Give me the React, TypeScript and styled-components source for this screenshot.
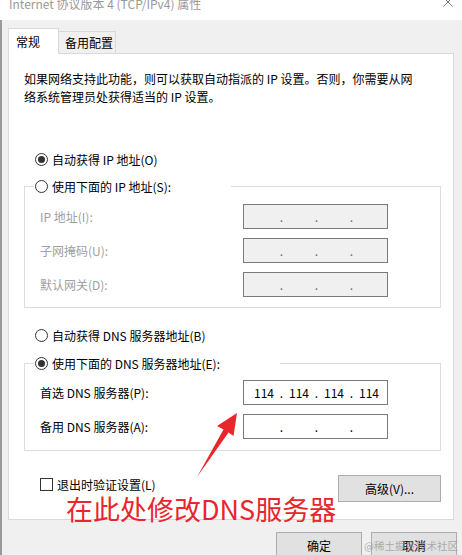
import React from "react";
import styled, { createGlobalStyle } from "styled-components";

const GlobalStyle = createGlobalStyle`
  html, body { margin: 0; padding: 0; }
  body {
    width: 462px;
    height: 555px;
    overflow: hidden;
    background: #f0f0f0;
    font-family: "Noto Sans CJK SC", "Noto Sans", sans-serif;
    font-size: 12px;
    color: #000;
  }
  * { box-sizing: border-box; }
`;

const Window = styled.div`
  position: relative;
  width: 462px;
  height: 555px;
  overflow: hidden;
  display: flex;
  flex-direction: column;
`;

const TitleBar = styled.div`
  height: 20px;
  flex: none;
  background: #fff;
  display: flex;
  justify-content: space-between;
  align-items: flex-start;
  padding: 0 9px 0 9px;
  overflow: hidden;
`;

const Title = styled.div`
  margin-top: -5px;
  line-height: 18px;
  color: #9a9a9a;
  white-space: nowrap;
`;

const CloseIcon = styled.svg`
  margin-top: -3px;
  flex: none;
`;

const Body = styled.div`
  flex: 1;
  display: flex;
  flex-direction: column;
  border-left: 2px solid #9a9a9a;
  padding: 8px 5px 0 6px;
`;

const TabStrip = styled.div`
  display: flex;
  align-items: flex-end;
  position: relative;
  z-index: 1;
  margin-bottom: -1px;
`;

const Tab = styled.div<{ $active?: boolean }>`
  display: flex;
  align-items: center;
  height: ${(p) => (p.$active ? "26px" : "22px")};
  margin-bottom: ${(p) => (p.$active ? "0" : "1px")};
  margin-left: ${(p) => (p.$active ? "0" : "-2px")};
  padding: ${(p) => (p.$active ? "0 18px 0 7px" : "0 2px 0 7px")};
  background: ${(p) => (p.$active ? "#fff" : "#f0f0f0")};
  border: 1px solid #d9d9d9;
  border-bottom: none;
  position: relative;
  z-index: ${(p) => (p.$active ? 2 : 1)};
  white-space: nowrap;
`;

const Panel = styled.div`
  background: #fff;
  border: 1px solid #d9d9d9;
  margin-right: 3px;
  padding: 16px 12px 17px 15px;
  display: flex;
  flex-direction: column;
`;

const Intro = styled.p`
  margin: 0;
  line-height: 18px;
  white-space: nowrap;
`;

const RadioRow = styled.label<{ $mt?: number }>`
  display: flex;
  align-items: center;
  gap: 4px;
  height: 18px;
  margin: ${(p) => p.$mt ?? 0}px 0 0 11px;
  white-space: nowrap;
`;

const RadioMark = styled.span<{ $checked?: boolean }>`
  width: 13px;
  height: 13px;
  flex: none;
  border-radius: 50%;
  border: 1px solid #333;
  background: #fff;
  display: flex;
  align-items: center;
  justify-content: center;
  &::after {
    content: "";
    display: ${(p) => (p.$checked ? "block" : "none")};
    width: 7px;
    height: 7px;
    border-radius: 50%;
    background: #333;
  }
`;

const GroupBox = styled.div<{ $mt: number; $pb: number }>`
  display: flex;
  flex-direction: column;
  border: 1px solid #dcdcdc;
  margin-top: ${(p) => p.$mt}px;
  padding-bottom: ${(p) => p.$pb}px;
`;

const Legend = styled.label`
  align-self: flex-start;
  display: flex;
  align-items: center;
  gap: 4px;
  height: 18px;
  margin: -10px 0 0 9px;
  padding: 0 60px 0 1px;
  background: #fff;
  white-space: nowrap;
`;

const FieldGrid = styled.div<{ $mt: number }>`
  display: grid;
  grid-template-columns: 203px 145px;
  grid-auto-rows: 25px;
  row-gap: 9px;
  align-items: center;
  margin: ${(p) => p.$mt}px 0 0 15px;
`;

const FieldLabel = styled.span<{ $disabled?: boolean }>`
  color: ${(p) => (p.$disabled ? "#a0a0a0" : "#000")};
  white-space: nowrap;
`;

const IpBox = styled.div<{ $disabled?: boolean }>`
  height: 25px;
  border: 1px solid #7a7a7a;
  background: ${(p) => (p.$disabled ? "#f0f0f0" : "#fff")};
  color: ${(p) => (p.$disabled ? "#6d6d6d" : "#000")};
  display: flex;
  align-items: center;
  padding-left: 5px;
`;

const Segment = styled.span`
  width: 30px;
  text-align: center;
`;

const Dot = styled.span`
  width: 5px;
  text-align: center;
`;

const BottomRow = styled.div`
  display: flex;
  justify-content: space-between;
  align-items: flex-start;
  margin-top: 24px;
`;

const CheckRow = styled.label`
  display: flex;
  align-items: center;
  gap: 4px;
  height: 18px;
  margin-left: 16px;
  white-space: nowrap;
`;

const CheckMark = styled.span`
  width: 13px;
  height: 13px;
  flex: none;
  border: 1px solid #333;
  background: #fff;
`;

const PushButton = styled.button<{ $w: number; $h: number }>`
  width: ${(p) => p.$w}px;
  height: ${(p) => p.$h}px;
  padding: 0;
  background: #e1e1e1;
  border: 1px solid #adadad;
  font-family: inherit;
  font-size: 12px;
  color: #000;
`;

const ButtonRow = styled.div`
  display: flex;
  justify-content: flex-end;
  gap: 9px;
  margin-top: 12px;
`;

const Annotation = styled.div`
  position: absolute;
  left: 66px;
  top: 495px;
  font-size: 27px;
  line-height: 27px;
  color: #e8262c;
  white-space: nowrap;
  pointer-events: none;
`;

const ArrowLayer = styled.svg`
  position: absolute;
  left: 0;
  top: 0;
  pointer-events: none;
`;

const Watermark = styled.div`
  position: absolute;
  right: 4px;
  top: 538px;
  font-size: 10.5px;
  line-height: 16px;
  color: rgba(150, 150, 150, 0.75);
  white-space: nowrap;
  pointer-events: none;
`;

const IpField: React.FC<{ parts?: string[]; disabled?: boolean }> = ({ parts = ["", "", "", ""], disabled }) => (
  <IpBox $disabled={disabled}>
    {parts.map((p, i) => (
      <React.Fragment key={i}>
        <Segment>{p}</Segment>
        {i < 3 && <Dot>.</Dot>}
      </React.Fragment>
    ))}
  </IpBox>
);

export default function App() {
  return (
    <>
      <GlobalStyle />
      <Window>
        <TitleBar>
          <Title>Internet 协议版本 4 (TCP/IPv4) 属性</Title>
          <CloseIcon width="10" height="10" viewBox="0 0 10 10">
            <path d="M0.5 0.5 L9.5 9.5 M9.5 0.5 L0.5 9.5" stroke="#7a7a7a" strokeWidth="1" fill="none" />
          </CloseIcon>
        </TitleBar>
        <Body>
          <TabStrip>
            <Tab $active>常规</Tab>
            <Tab>备用配置</Tab>
          </TabStrip>
          <Panel>
            <Intro>
              如果网络支持此功能，则可以获取自动指派的 IP 设置。否则，你需要从网
              <br />
              络系统管理员处获得适当的 IP 设置。
            </Intro>
            <RadioRow $mt={44}>
              <RadioMark $checked />
              自动获得 IP 地址(O)
            </RadioRow>
            <GroupBox $mt={18} $pb={10}>
              <Legend>
                <RadioMark />
                使用下面的 IP 地址(S):
              </Legend>
              <FieldGrid $mt={9}>
                <FieldLabel $disabled>IP 地址(I):</FieldLabel>
                <IpField disabled />
                <FieldLabel $disabled>子网掩码(U):</FieldLabel>
                <IpField disabled />
                <FieldLabel $disabled>默认网关(D):</FieldLabel>
                <IpField disabled />
              </FieldGrid>
            </GroupBox>
            <RadioRow $mt={18}>
              <RadioMark />
              自动获得 DNS 服务器地址(B)
            </RadioRow>
            <GroupBox $mt={19} $pb={11}>
              <Legend>
                <RadioMark $checked />
                使用下面的 DNS 服务器地址(E):
              </Legend>
              <FieldGrid $mt={8}>
                <FieldLabel>首选 DNS 服务器(P):</FieldLabel>
                <IpField parts={["114", "114", "114", "114"]} />
                <FieldLabel>备用 DNS 服务器(A):</FieldLabel>
                <IpField />
              </FieldGrid>
            </GroupBox>
            <BottomRow>
              <CheckRow>
                <CheckMark />
                退出时验证设置(L)
              </CheckRow>
              <PushButton $w={103} $h={27}>高级(V)...</PushButton>
            </BottomRow>
          </Panel>
          <ButtonRow>
            <PushButton $w={86} $h={26}>确定</PushButton>
            <PushButton $w={86} $h={26}>取消</PushButton>
          </ButtonRow>
        </Body>
        <ArrowLayer width="462" height="555" viewBox="0 0 462 555">
          <polygon
            points="237,413 233.5,436 228.5,432.5 197,477 223.5,429.5 217,426"
            fill="#e8262c"
          />
        </ArrowLayer>
        <Annotation>在此处修改DNS服务器</Annotation>
        <Watermark>@稀土掘金技术社区</Watermark>
      </Window>
    </>
  );
}
